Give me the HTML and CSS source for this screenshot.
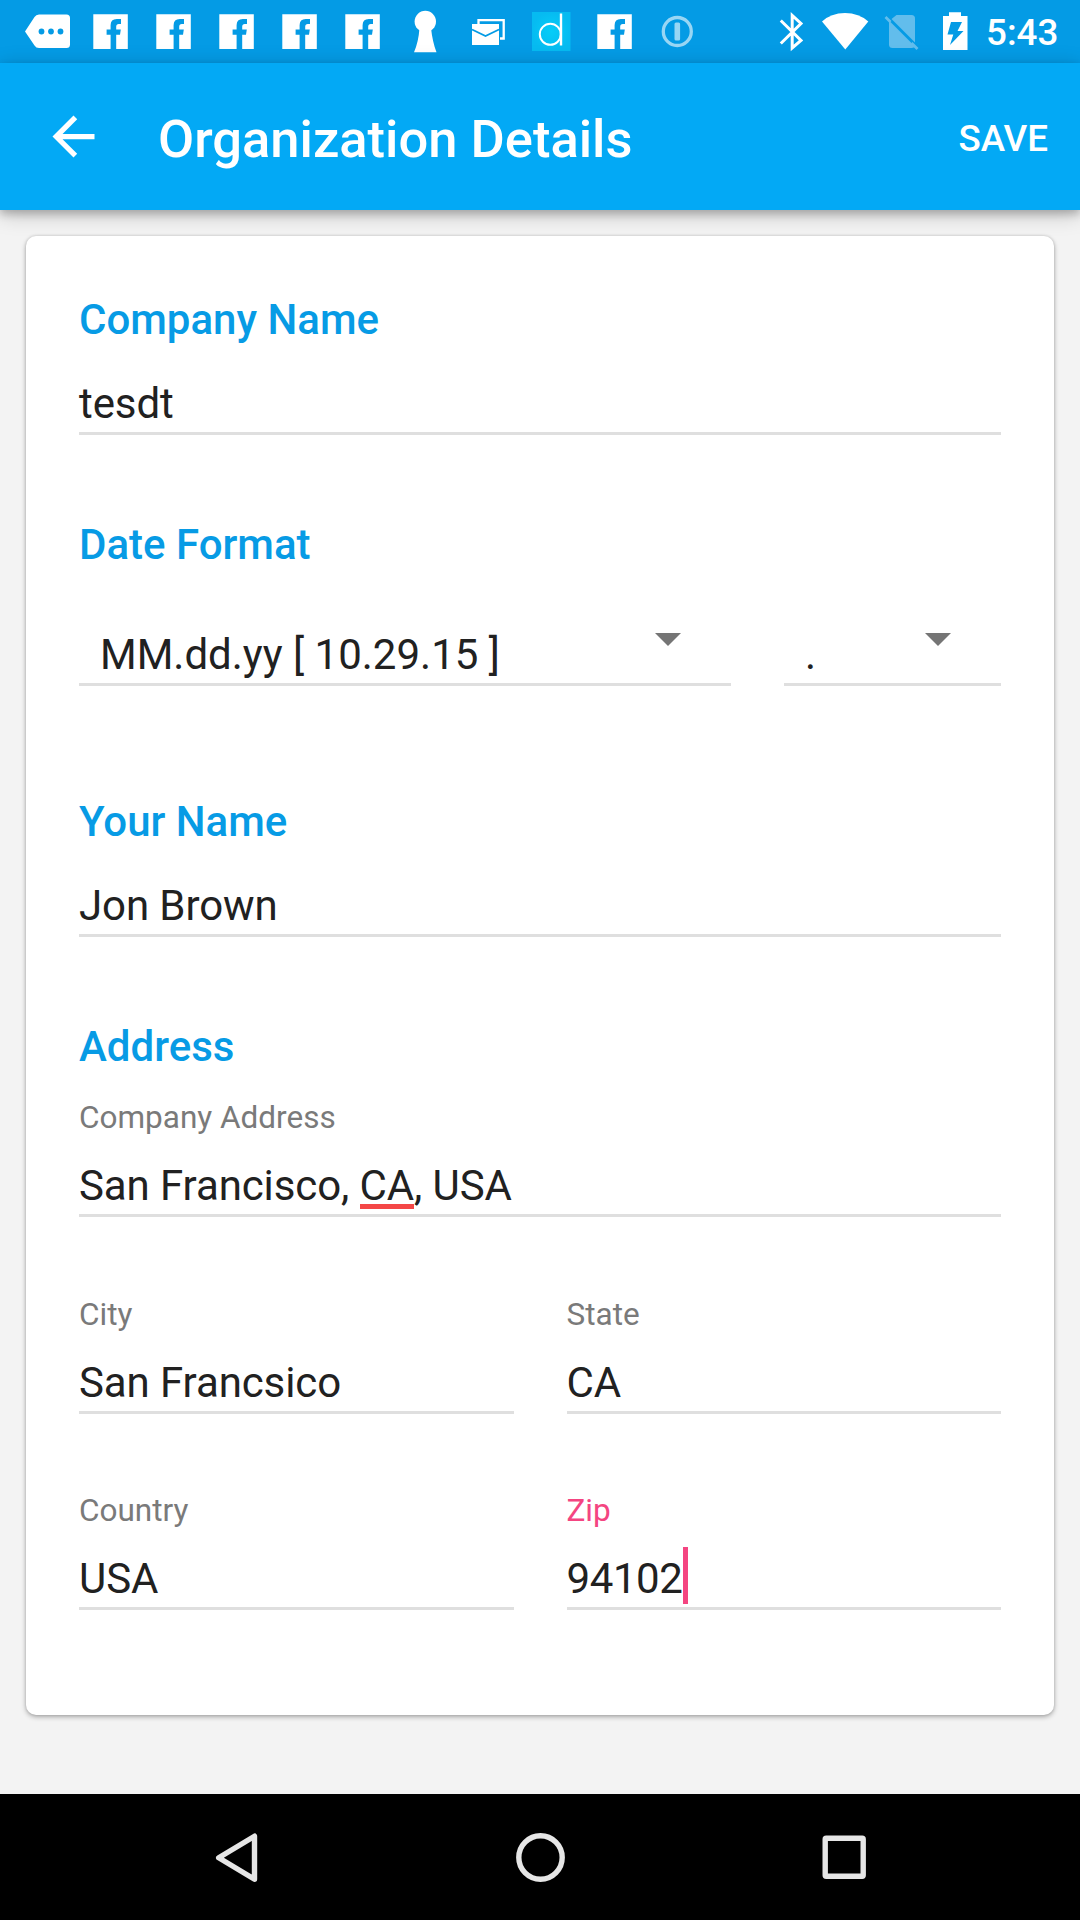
FILE: index.html
```html
<!DOCTYPE html>
<html lang="en">
<head>
<meta charset="utf-8">
<title>Organization Details</title>
<link rel="stylesheet" href="styles.css">
</head>
<body>
<svg class="defs" width="0" height="0" aria-hidden="true">
  <symbol id="facebook" viewBox="0 0 63 63">
    <path fill="#fff" d="M14.3 14.3H48.8V49H37.2V34.7H41L41.8 29.6H37.2V26.6Q37.2 24 39.8 24H42V19H37.8Q31.6 19 31.6 25.3V29.6H27.6V34.7H31.6V49H14.3Z"/>
  </symbol>
</svg>
<div class="screen">
  <div class="status-bar">
    <div class="notifications">
      <svg class="slot" viewBox="16 0 63 63"><path fill="#fff" d="M25 31.5L34.5 17Q36 14.5 39 14.5H66.5Q70 14.5 70 18V44.5Q70 48 66.5 48H39Q36 48 34.5 45.500Z"/><g fill="#049be5"><circle cx="41.500" cy="31.500" r="2.900"/><circle cx="51" cy="31.500" r="2.900"/><circle cx="60.500" cy="31.500" r="2.900"/></g></svg>
      <svg class="slot"><use href="#facebook"/></svg>
      <svg class="slot"><use href="#facebook"/></svg>
      <svg class="slot"><use href="#facebook"/></svg>
      <svg class="slot"><use href="#facebook"/></svg>
      <svg class="slot"><use href="#facebook"/></svg>
      <svg class="slot" viewBox="394 0 63 63"><circle cx="425.300" cy="21.500" r="10.700" fill="#fff"/><path fill="#fff" d="M419.500 28H431Q432.500 42 436.500 52.300H414Q418.500 42 419.500 28Z"/></svg>
      <svg class="slot" viewBox="457 0 63 63"><path fill="none" stroke="#fff" stroke-width="2.300" d="M478.500 24V20.200H503.700V38.500H500"/><path fill="#fff" d="M472 24H499V45H472Z"/><path fill="none" stroke="#049be5" stroke-width="1.800" d="M472 29.500L485.500 36L499 29.500"/></svg>
      <svg class="slot" viewBox="520 0 63 63"><defs><radialGradient id="aqua"><stop offset="0" stop-color="#06cdf8"/><stop offset="1" stop-color="#06bbf1"/></radialGradient></defs><path fill="url(#aqua)" d="M532 12H570.500V51H532Z"/><circle cx="550.300" cy="34.300" r="10.500" fill="none" stroke="#fff" stroke-width="2"/><path stroke="#fff" stroke-width="2.400" d="M561 13.500V45.500"/></svg>
      <svg class="slot"><use href="#facebook"/></svg>
      <svg class="slot" viewBox="646 0 63 63" opacity=".68"><circle cx="677.300" cy="31.500" r="14" fill="none" stroke="#dff2fc" stroke-width="3.300"/><rect x="674.500" y="22.500" width="5.600" height="18" rx="1.500" fill="#dff2fc"/></svg>
    </div>
    <div class="system">
      <svg width="48" height="63" viewBox="770 0 48 63"><path fill="none" stroke="#fff" stroke-width="3" d="M780.800 20.500L801 40.500L792.200 48V15.500L801 23.500L780.800 43.500"/></svg>
      <svg width="56" height="63" viewBox="818 0 56 63"><path fill="#fff" d="M822 21.500Q831 13 845 13Q859 13 868.300 21.500L845.300 49.500Z"/></svg>
      <svg width="56" height="63" viewBox="874 0 56 63"><path fill="#62bdec" d="M889 21L896.500 15H911.500Q915 15 915 18.500V44.500Q915 48 911.500 48H892.500Q889 48 889 44.500Z"/><path stroke="#049be5" stroke-width="2.800" d="M890 19.500L916 45.500"/><path stroke="#62bdec" stroke-width="2.800" d="M885.500 17L890.500 22M911.500 43L917.500 49"/></svg>
      <svg width="50" height="63" viewBox="930 0 50 63"><path fill="#fff" d="M943 16H949V12.200H961V16H967.500V50H943Z"/><path fill="#049be5" d="M951 22H962L957.500 31H963.500L950 45L953.300 34.500H947.500Z"/></svg>
      <span class="clock">5:43</span>
    </div>
  </div>
  <header class="app-bar">
    <svg class="back" viewBox="0 0 24 24"><path fill="#fff" d="M20 11H7.830l5.590-5.590L12 4l-8 8 8 8 1.410-1.410L7.830 13H20v-2z"/></svg>
    <h1 class="title">Organization Details</h1>
    <span class="save">SAVE</span>
  </header>
  <main class="content">
    <section class="card">
      <div class="group">
        <h2 class="heading">Company Name</h2>
        <div class="value">tesdt</div>
      </div>
      <div class="group group-date">
        <h2 class="heading">Date Format</h2>
        <div class="spinners">
          <div class="value spinner"><span>MM.dd.yy [ 10.29.15 ]</span><i class="arrow"></i></div>
          <div class="value spinner"><span>.</span><i class="arrow"></i></div>
        </div>
      </div>
      <div class="group">
        <h2 class="heading">Your Name</h2>
        <div class="value">Jon Brown</div>
      </div>
      <div class="group group-address">
        <h2 class="heading">Address</h2>
        <div class="fields">
          <div class="field wide"><div class="label">Company Address</div><div class="value">San Francisco, <span class="misspelled">CA</span>, USA</div></div>
          <div class="field"><div class="label">City</div><div class="value">San Francsico</div></div>
          <div class="field"><div class="label">State</div><div class="value">CA</div></div>
          <div class="field"><div class="label">Country</div><div class="value">USA</div></div>
          <div class="field"><div class="label active">Zip</div><div class="value"><span class="editing">94102</span></div></div>
        </div>
      </div>
    </section>
  </main>
  <nav class="nav-bar">
    <svg viewBox="0 0 63 63"><path d="M34.500 10.200V53.300L-1.300 31.700Z" transform="translate(15 0)"/></svg>
    <svg viewBox="0 0 63 63"><circle cx="31.500" cy="31.500" r="21.700"/></svg>
    <svg viewBox="0 0 63 63"><rect x="12.200" y="12.300" width="38" height="38" rx="1"/></svg>
  </nav>
</div>
</body>
</html>
```
FILE: styles.css
```css
* { box-sizing: border-box; }
body { margin: 0; font-family: Roboto, "Liberation Sans", sans-serif; }
svg { display: block; flex: none; }
h1, h2 { margin: 0; font-weight: 500; }
.defs { position: absolute; }
.screen { width: 1080px; height: 1920px; display: flex; flex-direction: column; background: #f3f3f3; overflow: hidden; }

.status-bar { height: 63px; flex: none; display: flex; justify-content: space-between; padding: 0 22px 0 16px; background: #049be5; color: #fff; }
.notifications, .system { display: flex; }
.slot { width: 63px; height: 63px; }
.system { width: 288px; flex: none; }
.clock { margin-left: 6px; padding-top: 11px; font-size: 36.75px; line-height: 44px; font-weight: 500; white-space: nowrap; }

.app-bar { height: 147px; flex: none; display: flex; align-items: center; padding: 0 32px 0 42px; background: #03a9f5; color: #fff; box-shadow: 0 4px 20px rgba(0,0,0,.22), 0 4px 8px rgba(0,0,0,.2); }
.back { width: 63px; height: 63px; }
.title { flex: 1; margin-left: 53px; padding-top: 4px; font-size: 52.5px; line-height: 62px; }
.save { padding-top: 4px; font-size: 36.75px; line-height: 44px; font-weight: 500; }

.content { flex: 1; padding: 26px 26px 79px; }
.card { height: 100%; padding: 59px 53px 0; background: #fff; border-radius: 10px; box-shadow: 0 2px 5px rgba(0,0,0,.3), 0 0 3px rgba(0,0,0,.14); }
.group { display: flex; flex-direction: column; gap: 33px; margin-bottom: 85px; }
.group-date { gap: 59px; margin-bottom: 111px; }
.group-address { gap: 27px; margin: 0; }
.heading { font-size: 42px; line-height: 50px; color: #079be5; }
.value { height: 57px; padding-top: 1px; border-bottom: 3px solid #dfdfdf; font-size: 42px; line-height: 50px; letter-spacing: -.1px; color: #212121; white-space: pre; }
.spinners { display: grid; grid-template-columns: 652px 1fr; gap: 53px; }
.spinner { display: flex; justify-content: space-between; padding: 1px 50px 0 21px; letter-spacing: 0; }
.arrow { margin-top: 3px; width: 26px; height: 13px; background: #757575; clip-path: polygon(0 0, 100% 0, 50% 100%); }
.fields { display: grid; grid-template-columns: 1fr 1fr; gap: 78px 53px; }
.wide { grid-column: 1 / -1; margin-bottom: 1px; }
.label { margin-bottom: 23px; font-size: 31.5px; line-height: 38px; color: #7a7a7a; }
.label.active { color: #f44581; }
.misspelled, .editing { position: relative; }
.editing { letter-spacing: -.4px; }
.misspelled::after { content: ""; position: absolute; left: 0; right: 0; bottom: 1px; height: 5px; background: #f44747; }
.editing::after { content: ""; position: absolute; left: 100%; top: -7px; width: 5px; height: 57px; background: #f44581; }

.nav-bar { height: 126px; flex: none; display: flex; justify-content: center; gap: 241px; align-items: center; background: #000; }
.nav-bar svg { width: 63px; height: 63px; fill: none; stroke: #e6e6e6; stroke-width: 5.4; stroke-linejoin: round; }
```
